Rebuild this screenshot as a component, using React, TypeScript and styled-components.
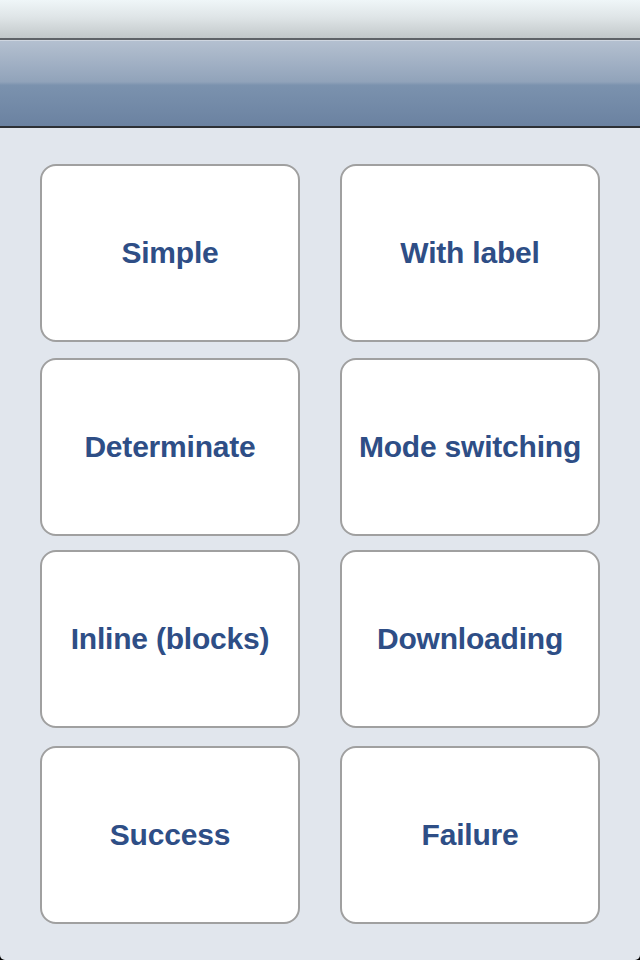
import styled, { createGlobalStyle } from 'styled-components';

const GlobalStyle = createGlobalStyle`
  html, body {
    margin: 0;
    padding: 0;
    background: #000;
  }
`;

const Screen = styled.div`
  width: 640px;
  height: 960px;
  background: #e1e6ed;
  border-radius: 0 0 5px 5px;
  overflow: hidden;
  display: flex;
  flex-direction: column;
  font-family: 'Liberation Sans', Arial, sans-serif;
`;

const StatusBar = styled.div`
  height: 38px;
  background: linear-gradient(to bottom, #eff6f8 0%, #dfe5e7 45%, #c2c8ca 100%);
  border-bottom: 2px solid #5f6368;
`;

const NavBar = styled.div`
  height: 85px;
  background: linear-gradient(to bottom, #b4c0d0 0%, #91a3ba 48%, #7b92ae 52%, #6b82a1 100%);
  border-top: 1px solid #cfd6e0;
  border-bottom: 2px solid #2d3035;
`;

const Content = styled.div`
  padding: 36px 40px 0;
  display: flex;
  flex-direction: column;
`;

const Row = styled.div<{ $gap: number }>`
  display: grid;
  grid-template-columns: 260px 260px;
  column-gap: 40px;
  margin-top: ${(p) => p.$gap}px;
`;

const Tile = styled.button`
  height: 178px;
  box-sizing: border-box;
  background: #fff;
  border: 2px solid #a0a0a0;
  border-radius: 16px;
  display: flex;
  align-items: center;
  justify-content: center;
  padding: 0;
  font-family: 'Liberation Sans', Arial, sans-serif;
  font-weight: bold;
  font-size: 30px;
  letter-spacing: -0.2px;
  color: #2e4e86;
  cursor: pointer;
`;

const rows: { gap: number; items: string[] }[] = [
  { gap: 0, items: ['Simple', 'With label'] },
  { gap: 16, items: ['Determinate', 'Mode switching'] },
  { gap: 14, items: ['Inline (blocks)', 'Downloading'] },
  { gap: 18, items: ['Success', 'Failure'] },
];

const App = () => {
  return (
    <>
      <GlobalStyle />
      <Screen>
        <StatusBar />
        <NavBar />
        <Content>
          {rows.map((row) => (
            <Row key={row.items[0]} $gap={row.gap}>
              {row.items.map((label) => (
                <Tile key={label}>{label}</Tile>
              ))}
            </Row>
          ))}
        </Content>
      </Screen>
    </>
  );
};

export default App;
